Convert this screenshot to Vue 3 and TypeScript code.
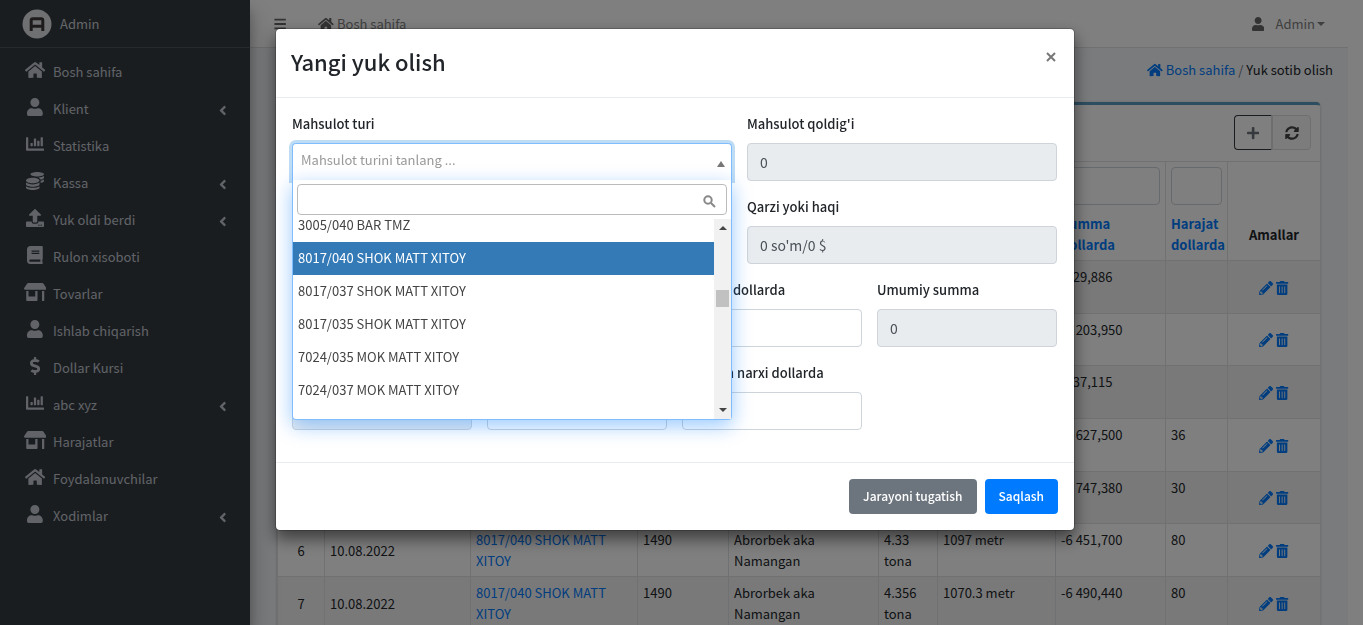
<script setup lang="ts">
import { onMounted, ref } from 'vue'

interface Icon { box: string; d: string }
interface MenuItem { label: string; icon: string; sub?: boolean }
interface Row { n: number; sum: string; extra: string; weight: string; length: string }

const icons: Record<string, Icon> = {
  home: { box: '0 0 576 512', d: 'M280.37 148.26L96 300.11V464a16 16 0 0 0 16 16l112.06-.29a16 16 0 0 0 15.92-16V368a16 16 0 0 1 16-16h64a16 16 0 0 1 16 16v95.64a16 16 0 0 0 16 16.05L464 480a16 16 0 0 0 16-16V300L295.67 148.26a12.19 12.19 0 0 0-15.3 0zM571.6 251.47L488 182.56V44.05a12 12 0 0 0-12-12h-56a12 12 0 0 0-12 12v72.61L318.47 43a48 48 0 0 0-61 0L4.34 251.47a12 12 0 0 0-1.6 16.9l25.5 31A12 12 0 0 0 45.15 301l235.22-193.74a12.19 12.19 0 0 1 15.3 0L530.9 301a12 12 0 0 0 16.9-1.6l25.5-31a12 12 0 0 0-1.7-16.93z' },
  user: { box: '0 0 448 512', d: 'M224 256c70.7 0 128-57.3 128-128S294.7 0 224 0 96 57.3 96 128s57.3 128 128 128zm89.6 32h-16.7c-22.2 10.2-46.9 16-72.9 16s-50.6-5.8-72.9-16h-16.7C60.2 288 0 348.2 0 422.4V464c0 26.5 21.5 48 48 48h352c26.5 0 48-21.5 48-48v-41.6c0-74.2-60.2-134.4-134.4-134.4z' },
  chart: { box: '0 0 512 512', d: 'M332.8 320h38.4c6.4 0 12.8-6.4 12.8-12.8V172.8c0-6.4-6.4-12.8-12.8-12.8h-38.4c-6.4 0-12.8 6.4-12.8 12.8v134.4c0 6.4 6.4 12.8 12.8 12.8zm96 0h38.4c6.4 0 12.8-6.4 12.8-12.8V76.8c0-6.4-6.4-12.8-12.8-12.8h-38.4c-6.4 0-12.8 6.4-12.8 12.8v230.4c0 6.4 6.4 12.8 12.8 12.8zm-288 0h38.4c6.4 0 12.8-6.4 12.8-12.8v-70.4c0-6.4-6.4-12.8-12.8-12.8h-38.4c-6.4 0-12.8 6.4-12.8 12.8v70.4c0 6.4 6.4 12.8 12.8 12.8zm96 0h38.4c6.4 0 12.8-6.4 12.8-12.8V108.8c0-6.4-6.4-12.8-12.8-12.8h-38.4c-6.4 0-12.8 6.4-12.8 12.8v198.4c0 6.4 6.4 12.8 12.8 12.8zM496 384H64V80c0-8.84-7.16-16-16-16H16C7.16 64 0 71.16 0 80v336c0 17.67 14.33 32 32 32h464c8.84 0 16-7.16 16-16v-32c0-8.84-7.16-16-16-16z' },
  coins: { box: '0 0 512 512', d: 'M0 405.3V448c0 35.3 86 64 192 64s192-28.7 192-64v-42.7C342.7 434.4 267.2 448 192 448S41.3 434.4 0 405.3zM320 128c106 0 192-28.7 192-64S426 0 320 0 128 28.7 128 64s86 64 192 64zM0 300.4V352c0 35.3 86 64 192 64s192-28.7 192-64v-51.6c-41.3 34-116.9 51.6-192 51.6S41.3 334.4 0 300.4zm416 11c57.3-11.1 96-31.7 96-55.4v-42.7c-23.2 16.4-57.3 27.6-96 34.5v63.6zM192 160C86 160 0 195.8 0 240s86 80 192 80 192-35.8 192-80-86-80-192-80zm219.3 56.3c60-10.8 100.7-32 100.7-56.3v-42.7c-35.5 25.1-96.5 38.6-160.7 41.8 29.5 14.3 51.2 33.5 60 57.2z' },
  upload: { box: '0 0 512 512', d: 'M296 384h-80c-13.3 0-24-10.7-24-24V192h-87.7c-17.8 0-26.7-21.5-14.1-34.1L242.3 5.7c7.5-7.5 19.8-7.5 27.3 0l152.2 152.2c12.6 12.6 3.7 34.1-14.1 34.1H320v168c0 13.3-10.7 24-24 24zm216-8v112c0 13.3-10.7 24-24 24H24c-13.3 0-24-10.7-24-24V376c0-13.3 10.7-24 24-24h136v8c0 30.9 25.1 56 56 56h80c30.9 0 56-25.1 56-56v-8h136c13.3 0 24 10.7 24 24zm-124 88c0-11-9-20-20-20s-20 9-20 20 9 20 20 20 20-9 20-20zm64 0c0-11-9-20-20-20s-20 9-20 20 9 20 20 20 20-9 20-20z' },
  book: { box: '0 0 448 512', d: 'M448 360V24c0-13.3-10.7-24-24-24H96C43 0 0 43 0 96v320c0 53 43 96 96 96h328c13.3 0 24-10.7 24-24v-16c0-7.5-3.5-14.3-8.9-18.7-4.2-15.4-4.2-59.3 0-74.7 5.4-4.3 8.9-11.1 8.9-18.6zM128 134c0-3.3 2.7-6 6-6h212c3.3 0 6 2.7 6 6v20c0 3.3-2.7 6-6 6H134c-3.3 0-6-2.7-6-6v-20zm0 64c0-3.3 2.7-6 6-6h212c3.3 0 6 2.7 6 6v20c0 3.3-2.7 6-6 6H134c-3.3 0-6-2.7-6-6v-20zm253.4 250H96c-17.7 0-32-14.3-32-32 0-17.6 14.4-32 32-32h285.4c-1.9 17.1-1.9 46.9 0 64z' },
  store: { box: '0 0 640 512', d: 'M320 384H128V224H64v256c0 17.7 14.3 32 32 32h256c17.7 0 32-14.3 32-32V224h-64v160zm314.6-241.8l-85.3-128c-6-8.9-16-14.2-26.7-14.2H117.4c-10.7 0-20.7 5.3-26.6 14.2l-85.3 128c-14.2 21.3 1 49.8 26.6 49.8H608c25.5 0 40.7-28.5 26.6-49.8zM512 496c0 8.8 7.2 16 16 16h32c8.8 0 16-7.2 16-16V224h-64v272z' },
  dollar: { box: '0 0 288 512', d: 'M209.2 233.4l-108-31.6C88.7 198.2 80 186.5 80 173.5c0-16.3 13.2-29.5 29.5-29.5h66.3c12.2 0 24.2 3.7 34.2 10.5 6.1 4.1 14.3 3.1 19.5-2l34.8-34c7.1-6.9 6.1-18.4-1.8-24.5C238 74.8 207.4 64.1 176 64V16c0-8.8-7.2-16-16-16h-32c-8.8 0-16 7.2-16 16v48h-2.5C45.8 64-5.4 118.7.5 183.6c4.2 46.1 39.4 83.6 83.8 96.6l102.5 30c12.5 3.7 21.2 15.3 21.2 28.3 0 16.3-13.2 29.5-29.5 29.5h-66.3C100 368 88 364.3 78 357.5c-6.1-4.1-14.3-3.1-19.5 2l-34.8 34c-7.1 6.9-6.1 18.4 1.8 24.5 24.5 19.2 55.1 29.9 86.5 30v48c0 8.8 7.2 16 16 16h32c8.8 0 16-7.2 16-16v-48.2c46.6-.9 90.3-28.6 105.7-72.7 21.5-61.6-14.6-124.8-72.5-141.7z' },
}

const menu: MenuItem[] = [
  { label: 'Bosh sahifa', icon: 'home' },
  { label: 'Klient', icon: 'user', sub: true },
  { label: 'Statistika', icon: 'chart' },
  { label: 'Kassa', icon: 'coins', sub: true },
  { label: 'Yuk oldi berdi', icon: 'upload', sub: true },
  { label: 'Rulon xisoboti', icon: 'book' },
  { label: 'Tovarlar', icon: 'store' },
  { label: 'Ishlab chiqarish', icon: 'user' },
  { label: 'Dollar Kursi', icon: 'dollar' },
  { label: 'abc xyz', icon: 'chart', sub: true },
  { label: 'Harajatlar', icon: 'store' },
  { label: 'Foydalanuvchilar', icon: 'home' },
  { label: 'Xodimlar', icon: 'user', sub: true },
]

const rows: Row[] = [
  { n: 1, sum: '-629,886', extra: '', weight: '', length: '' },
  { n: 2, sum: '-6 203,950', extra: '', weight: '', length: '' },
  { n: 3, sum: '-637,115', extra: '', weight: '', length: '' },
  { n: 4, sum: '-6 627,500', extra: '36', weight: '', length: '' },
  { n: 5, sum: '-6 747,380', extra: '30', weight: '', length: '' },
  { n: 6, sum: '-6 451,700', extra: '80', weight: '4.33 tona', length: '1097 metr' },
  { n: 7, sum: '-6 490,440', extra: '80', weight: '4.356 tona', length: '1070.3 metr' },
]

const products = [
  '3005/040 BAR TMZ',
  '8017/040 SHOK MATT XITOY',
  '8017/037 SHOK MATT XITOY',
  '8017/035 SHOK MATT XITOY',
  '7024/035 MOK MATT XITOY',
  '7024/037 MOK MATT XITOY',
  '7024/040 MOK MATT XITOY',
]
const active = ref(1)
const search = ref('')
const list = ref<HTMLUListElement | null>(null)

onMounted(() => {
  if (list.value) list.value.scrollTop = 10
})
</script>

<template>
  <div class="app">
    <aside class="sidebar">
      <a href="#" class="brand">
        <svg class="logo" viewBox="0 0 30 30" aria-hidden="true">
          <circle cx="15" cy="15" r="14.5" fill="#dfe0e2" />
          <path d="M9.2 22V11.4a1.6 1.6 0 0 1 1.6-1.6h8.4a1.6 1.6 0 0 1 1.6 1.6V22M9.2 17.2h11.6" fill="none" stroke="#3d3739" stroke-width="3" />
        </svg>
        <span>Admin</span>
      </a>
      <nav class="menu">
        <a v-for="item in menu" :key="item.label" href="#" class="menu-item">
          <span class="menu-icon">
            <svg :viewBox="icons[item.icon].box" height="18" aria-hidden="true"><path :d="icons[item.icon].d" /></svg>
          </span>
          <span class="menu-label">{{ item.label }}</span>
          <svg v-if="item.sub" class="angle" viewBox="0 0 256 512" aria-hidden="true">
            <path d="M31.7 239l136-136c9.4-9.4 24.6-9.4 33.9 0l22.6 22.6c9.4 9.4 9.4 24.6 0 33.9L127.9 256l96.4 96.4c9.4 9.4 9.4 24.6 0 33.9L201.7 409c-9.4 9.4-24.6 9.4-33.9 0l-136-136c-9.5-9.4-9.5-24.6-.1-34z" />
          </svg>
        </a>
      </nav>
    </aside>

    <div class="main">
      <header class="navbar">
        <button type="button" class="plain" aria-label="Menyu">
          <svg viewBox="0 0 448 512" height="14" aria-hidden="true"><path d="M16 60h416v72H16zM16 220h416v72H16zM16 380h416v72H16z" /></svg>
        </button>
        <a href="#" class="nav-home">
          <svg :viewBox="icons.home.box" height="14" aria-hidden="true"><path :d="icons.home.d" /></svg>
          Bosh sahifa
        </a>
        <button type="button" class="plain account">
          <svg :viewBox="icons.user.box" height="14" aria-hidden="true"><path :d="icons.user.d" /></svg>
          <span>Admin</span>
          <i class="caret"></i>
        </button>
      </header>

      <div class="content">
        <nav class="crumbs">
          <a href="#">
            <svg :viewBox="icons.home.box" height="14" aria-hidden="true"><path :d="icons.home.d" /></svg>
            Bosh sahifa
          </a>
          <span class="slash">/</span>
          <span>Yuk sotib olish</span>
        </nav>

        <section class="card">
          <div class="tools">
            <button type="button" class="tool add" aria-label="Yangi">
              <svg viewBox="0 0 448 512" height="14" aria-hidden="true"><path d="M416 208H272V64c0-17.67-14.33-32-32-32h-32c-17.67 0-32 14.33-32 32v144H32c-17.67 0-32 14.33-32 32v32c0 17.67 14.33 32 32 32h144v144c0 17.67 14.33 32 32 32h32c17.67 0 32-14.33 32-32V304h144c17.67 0 32-14.33 32-32v-32c0-17.67-14.33-32-32-32z" /></svg>
            </button>
            <button type="button" class="tool" aria-label="Yangilash">
              <svg viewBox="0 0 512 512" height="14" aria-hidden="true"><path d="M370.72 133.28C339.458 104.008 298.888 87.962 255.848 88c-77.458.068-144.328 53.178-162.791 126.85-1.344 5.363-6.122 9.15-11.651 9.15H24.103c-7.498 0-13.194-6.807-11.807-14.176C33.933 94.924 134.813 8 256 8c66.448 0 126.791 26.136 171.315 68.685L463.03 40.97C478.149 25.851 504 36.559 504 57.941V192c0 13.255-10.745 24-24 24H345.941c-21.382 0-32.09-25.851-16.971-40.971l41.75-41.749zM32 296h134.059c21.382 0 32.09 25.851 16.971 40.971l-41.75 41.75c31.262 29.273 71.835 45.319 114.876 45.28 77.418-.07 144.315-53.144 162.787-126.849 1.344-5.363 6.122-9.15 11.651-9.15h57.304c7.498 0 13.194 6.807 11.807 14.176C478.067 417.076 377.187 504 256 504c-66.448 0-126.791-26.136-171.315-68.685L48.97 471.03C33.851 486.149 8 475.441 8 454.059V320c0-13.255 10.745-24 24-24z" /></svg>
            </button>
          </div>
          <table class="grid">
            <colgroup>
              <col class="c-n" /><col class="c-date" /><col class="c-prod" /><col class="c-price" /><col class="c-client" />
              <col class="c-weight" /><col class="c-length" /><col class="c-sum" /><col class="c-extra" /><col class="c-act" />
            </colgroup>
            <thead>
              <tr class="filters">
                <td></td><td></td><td></td><td></td><td></td><td></td><td></td>
                <td><input type="text" aria-label="Summa dollarda" /></td>
                <td><input type="text" aria-label="Harajat dollarda" /></td>
                <td></td>
              </tr>
              <tr class="titles">
                <th></th><th></th><th></th><th></th><th></th><th></th><th></th>
                <th><a href="#">Summa dollarda</a></th>
                <th><a href="#">Harajat dollarda</a></th>
                <th class="center">Amallar</th>
              </tr>
            </thead>
            <tbody>
              <tr v-for="row in rows" :key="row.n">
                <td class="center mid">{{ row.n }}</td>
                <td class="mid">10.08.2022</td>
                <td><a href="#">8017/040 SHOK MATT XITOY</a></td>
                <td>1490</td>
                <td>Abrorbek aka Namangan</td>
                <td>{{ row.weight }}</td>
                <td>{{ row.length }}</td>
                <td class="nowrap">{{ row.sum }}</td>
                <td>{{ row.extra }}</td>
                <td class="mid">
                  <div class="acts">
                    <a href="#" aria-label="Tahrirlash"><svg viewBox="0 0 512 512" height="14" aria-hidden="true"><path d="M498 142l-46 46c-5 5-13 5-17 0L324 77c-5-5-5-12 0-17l46-46c19-19 49-19 68 0l60 60c19 19 19 49 0 68zm-214-42L22 362 0 484c-3 16 12 30 28 28l122-22 262-262c5-5 5-13 0-17L301 100c-4-5-12-5-17 0zM124 340c-5-6-5-14 0-20l154-154c6-5 14-5 20 0s5 14 0 20L144 340c-6 5-14 5-20 0zm-36 84h48v36l-64 12-32-31 12-65h36v48z" /></svg></a>
                    <a href="#" aria-label="O'chirish"><svg viewBox="0 0 448 512" height="14" aria-hidden="true"><path d="M32 464a48 48 0 0 0 48 48h288a48 48 0 0 0 48-48V128H32zm272-256a16 16 0 0 1 32 0v224a16 16 0 0 1-32 0zm-96 0a16 16 0 0 1 32 0v224a16 16 0 0 1-32 0zm-96 0a16 16 0 0 1 32 0v224a16 16 0 0 1-32 0zM432 32H312l-9-19a24 24 0 0 0-22-13H167a24 24 0 0 0-22 13l-9 19H16A16 16 0 0 0 0 48v32a16 16 0 0 0 16 16h416a16 16 0 0 0 16-16V48a16 16 0 0 0-16-16z" /></svg></a>
                  </div>
                </td>
              </tr>
            </tbody>
          </table>
        </section>
      </div>
    </div>

    <div class="backdrop">
      <div class="modal" role="dialog" aria-modal="true" aria-labelledby="modal-title">
        <header class="modal-head">
          <h2 id="modal-title">Yangi yuk olish</h2>
          <button type="button" class="close" aria-label="Yopish">
            <svg viewBox="0 0 10 10" width="10" height="10" aria-hidden="true"><path d="M1 1l8 8M9 1L1 9" /></svg>
          </button>
        </header>

        <form id="load-form" class="modal-body" @submit.prevent>
          <div class="field wide">
            <label for="product">Mahsulot turi</label>
            <div class="select">
              <button id="product" type="button" class="select-box" aria-haspopup="listbox" aria-expanded="true">
                <span>Mahsulot turini tanlang ...</span>
                <i class="up"></i>
              </button>
              <div class="dropdown">
                <div class="search">
                  <input v-model="search" type="text" aria-label="Qidirish" />
                  <svg viewBox="0 0 13 13" width="13" height="13" aria-hidden="true"><circle cx="5" cy="5" r="3.7" /><path d="M8 8l4 4" /></svg>
                </div>
                <div class="options">
                  <ul ref="list" role="listbox" aria-label="Mahsulot turi">
                    <li v-for="(p, i) in products" :key="p" role="option" :aria-selected="i === active" :class="{ active: i === active }" @mouseenter="active = i">{{ p }}</li>
                  </ul>
                  <div class="bar" aria-hidden="true"><i class="up"></i><i class="thumb"></i><i class="down"></i></div>
                </div>
              </div>
            </div>
          </div>
          <div class="field side">
            <label for="rest">Mahsulot qoldig'i</label>
            <input id="rest" type="text" value="0" disabled />
          </div>

          <div class="field side second">
            <label for="debt">Qarzi yoki haqi</label>
            <input id="debt" type="text" value="0 so'm/0 $" disabled />
          </div>

          <div class="field third">
            <label for="sum-usd">Summa dollarda</label>
            <input id="sum-usd" type="text" />
          </div>
          <div class="field">
            <label for="total">Umumiy summa</label>
            <input id="total" type="text" value="0" disabled />
          </div>

          <div class="field">
            <input type="text" disabled aria-label="Summa" />
          </div>
          <div class="field">
            <input type="text" aria-label="Narx" />
          </div>
          <div class="field">
            <label for="price-usd">Metrdan narxi dollarda</label>
            <input id="price-usd" type="text" />
          </div>
        </form>

        <footer class="modal-foot">
          <button type="button" class="btn gray">Jarayoni tugatish</button>
          <button type="submit" form="load-form" class="btn blue">Saqlash</button>
        </footer>
      </div>
    </div>
  </div>
</template>

<style>
body {
  margin: 0;
  background: #fff;
  overflow: hidden;
}
</style>

<style scoped>
.app, .app * {
  box-sizing: border-box;
}
.app {
  display: grid;
  grid-template-columns: 250px minmax(0, 1fr);
  height: 100vh;
  padding-right: 15px;
  overflow: hidden;
  font-family: "Noto Sans CJK SC", "Noto Sans", sans-serif;
  font-size: 13px;
  line-height: 21px;
  color: #212529;
}
button, input {
  font: inherit;
  color: inherit;
}
a {
  color: #007bff;
  text-decoration: none;
}
svg {
  fill: currentColor;
  flex: none;
}

.sidebar {
  z-index: 1;
  background: #343a40;
  box-shadow: 0 14px 28px rgba(0, 0, 0, .25), 0 10px 10px rgba(0, 0, 0, .22);
}
.brand {
  display: flex;
  align-items: center;
  gap: 8px;
  height: 48px;
  padding-left: 22px;
  border-bottom: 1px solid #4b545c;
  color: #c9cdd1;
}
.logo {
  width: 30px;
  height: 30px;
}
.menu {
  padding: 6px 8px;
}
.menu-item {
  display: flex;
  align-items: center;
  height: 37px;
  padding: 0 16px 0 14px;
  color: #c2c7d0;
}
.menu-icon {
  display: flex;
  justify-content: center;
  width: 26px;
  margin-right: 5px;
  padding-bottom: 6px;
}
.menu-label {
  flex: 1;
  padding-bottom: 2px;
}
.angle {
  height: 15px;
  margin-top: 2px;
}

.main {
  min-width: 0;
  background: #f4f6f9;
}
.navbar {
  display: flex;
  align-items: center;
  height: 48px;
  padding: 0 23px 0 24px;
  background: #fff;
  border-bottom: 1px solid #dee2e6;
  color: #7f7f7f;
}
.navbar svg {
  color: #666;
}
.plain {
  display: flex;
  align-items: center;
  padding: 0;
  border: 0;
  background: none;
}
.nav-home {
  display: flex;
  align-items: center;
  gap: 3px;
  margin-left: 32px;
  color: inherit;
}
.account {
  margin-left: auto;
}
.account span {
  margin: 0 2px 0 11px;
}
.caret, .up, .down {
  border: 4px solid transparent;
}
.caret, .down {
  border-top-color: currentColor;
  border-bottom: 0;
}
.up {
  border-bottom-color: currentColor;
  border-top: 0;
}
.content {
  padding: 11px 28px 0 27px;
}
.crumbs {
  display: flex;
  justify-content: flex-end;
  margin-right: -13px;
}
.crumbs a {
  display: flex;
  align-items: center;
  gap: 3px;
}
.slash {
  margin: 0 3px;
  color: #6c757d;
}
.card {
  margin-top: 22px;
  background: #fff;
  border-top: 3px solid #5b9bc0;
  border-radius: 4px;
  box-shadow: 0 0 1px rgba(0, 0, 0, .125), 0 1px 3px rgba(0, 0, 0, .2);
}
.tools {
  display: flex;
  justify-content: flex-end;
  padding: 10px 9px;
  height: 56px;
}
.tool {
  display: grid;
  place-items: center;
  width: 39px;
  height: 35px;
  padding: 0;
  background: #f8f9fa;
  border: 1px solid #ddd;
  border-radius: 0 4px 4px 0;
  color: #444;
}
.tool.add {
  width: 38px;
  background: #fff;
  border-color: #343a40;
  border-right-color: #ddd;
  border-radius: 4px 0 0 4px;
  color: #6c757d;
}
.grid {
  width: 100%;
  table-layout: fixed;
  border-collapse: collapse;
}
.c-n { width: 47px; }
.c-date { width: 146px; }
.c-prod { width: 167px; }
.c-price { width: 91px; }
.c-client { width: 150px; }
.c-weight { width: 59px; }
.c-length { width: 118px; }
.c-sum { width: 110px; }
.c-extra { width: 62px; }
.c-act { width: 93px; }
.grid th, .grid td {
  padding: 5px;
  border: 1px solid #dee2e6;
  text-align: left;
  vertical-align: top;
}
.grid .filters td {
  border-bottom: 0;
}
.grid .titles th {
  padding-top: 3px;
  border-top: 0;
  vertical-align: middle;
}
.grid .center {
  text-align: center;
}
.grid .mid {
  vertical-align: middle;
}
.nowrap {
  white-space: nowrap;
}
.grid input {
  display: block;
  width: 100%;
  height: 38px;
  border: 1px solid #ced4da;
  border-radius: 4px;
  background: #fff;
}
.grid tbody tr {
  height: 53px;
}
.grid tbody tr:nth-child(3n + 2) {
  height: 52px;
}
.grid tbody td {
  padding-bottom: 4px;
}
.grid tbody tr:nth-child(odd) {
  background: #f2f2f2;
}
.acts {
  display: flex;
  justify-content: center;
  gap: 3px;
}
.acts svg {
  display: block;
}

.backdrop {
  position: fixed;
  inset: 0;
  z-index: 10;
  display: flex;
  justify-content: center;
  align-items: flex-start;
  padding: 28px 13px 0 0;
  background: rgba(0, 0, 0, .5);
}
.modal {
  width: 800px;
  background: #fff;
  background-clip: padding-box;
  border: 1px solid rgba(0, 0, 0, .2);
  border-radius: 5px;
  box-shadow: 0 8px 16px rgba(0, 0, 0, .5);
}
.modal-head {
  display: flex;
  justify-content: space-between;
  align-items: flex-start;
  padding: 14px 17px 18px 15px;
  border-bottom: 1px solid #e9ecef;
}
.modal-head h2 {
  margin: 0;
  font-size: 22px;
  line-height: 36px;
  font-weight: 500;
}
.close {
  display: grid;
  padding: 9px 1px;
  border: 0;
  background: none;
}
.close svg {
  stroke: #777;
  stroke-width: 2;
}
.modal-body {
  display: grid;
  grid-template-columns: repeat(12, minmax(0, 1fr));
  align-items: end;
  gap: 15px;
  padding: 15px 17px 32px 16px;
}
.field {
  grid-column: span 3;
}
.wide { grid-column: span 7; }
.side { grid-column: span 5; }
.second { grid-column: 8 / span 5; }
.third { grid-column: 7 / span 3; }
.field label {
  display: block;
  margin-bottom: 9px;
  font-weight: 500;
}
.field > input {
  display: block;
  width: 100%;
  height: 38px;
  padding: 0 12px;
  border: 1px solid #ced4da;
  border-radius: 4px;
  background: #fff;
  font-size: 14px;
  color: #495057;
}
.field > input:disabled {
  background: #e9ecef;
}
.select {
  position: relative;
  height: 38px;
}
.select-box {
  display: flex;
  align-items: center;
  justify-content: space-between;
  width: 100%;
  height: 37px;
  padding: 0 6px 5px 8px;
  background: #fff;
  border: 1px solid #80bdff;
  border-bottom: 0;
  border-radius: 4px 4px 0 0;
  box-shadow: 0 0 0 3px #bfdcf5;
  color: #999;
}
.select-box .up {
  margin-top: 8px;
  border-bottom: 6px solid #777;
}
.dropdown {
  position: absolute;
  top: 37px;
  left: 0;
  right: 0;
  z-index: 2;
  background: #fff;
  border: 1px solid #80bdff;
  border-top: 0;
  border-radius: 0 0 4px 4px;
  box-shadow: 0 6px 20px rgba(0, 123, 255, .4);
}
.search {
  display: grid;
  padding: 4px;
}
.search input, .search svg {
  grid-area: 1 / 1;
}
.search input {
  width: 100%;
  height: 31px;
  padding: 0 30px 0 8px;
  border: 1px solid #bbb;
  border-radius: 4px;
  background: #fff;
}
.search svg {
  place-self: center end;
  margin: 4px 11px 0 0;
  fill: none;
  stroke: #888;
  stroke-width: 2;
}
.options {
  display: flex;
  height: 200px;
}
.options ul {
  flex: 1;
  margin: 0 0 2px;
  padding: 0;
  overflow: hidden;
  list-style: none;
}
.options li {
  padding: 5px 6px 7px 5px;
  color: #444;
}
.options li.active {
  background: #337ab7;
  color: #fff;
}
.bar {
  display: flex;
  flex-direction: column;
  align-items: center;
  width: 17px;
  padding: 7px 0;
  background: #f1f1f1;
  color: #444;
}
.bar .thumb {
  width: 13px;
  height: 17px;
  margin: 60px 0 auto;
  background: #c1c1c1;
}
.modal-foot {
  display: flex;
  justify-content: flex-end;
  gap: 8px;
  padding: 16px;
  border-top: 1px solid #e9ecef;
}
.btn {
  height: 35px;
  padding: 0 14px 2px;
  border: 0;
  border-radius: 4px;
  color: #fff;
  font-size: 12px;
  font-weight: 500;
}
.gray { background: #6c757d; }
.blue { background: #007bff; }
</style>
